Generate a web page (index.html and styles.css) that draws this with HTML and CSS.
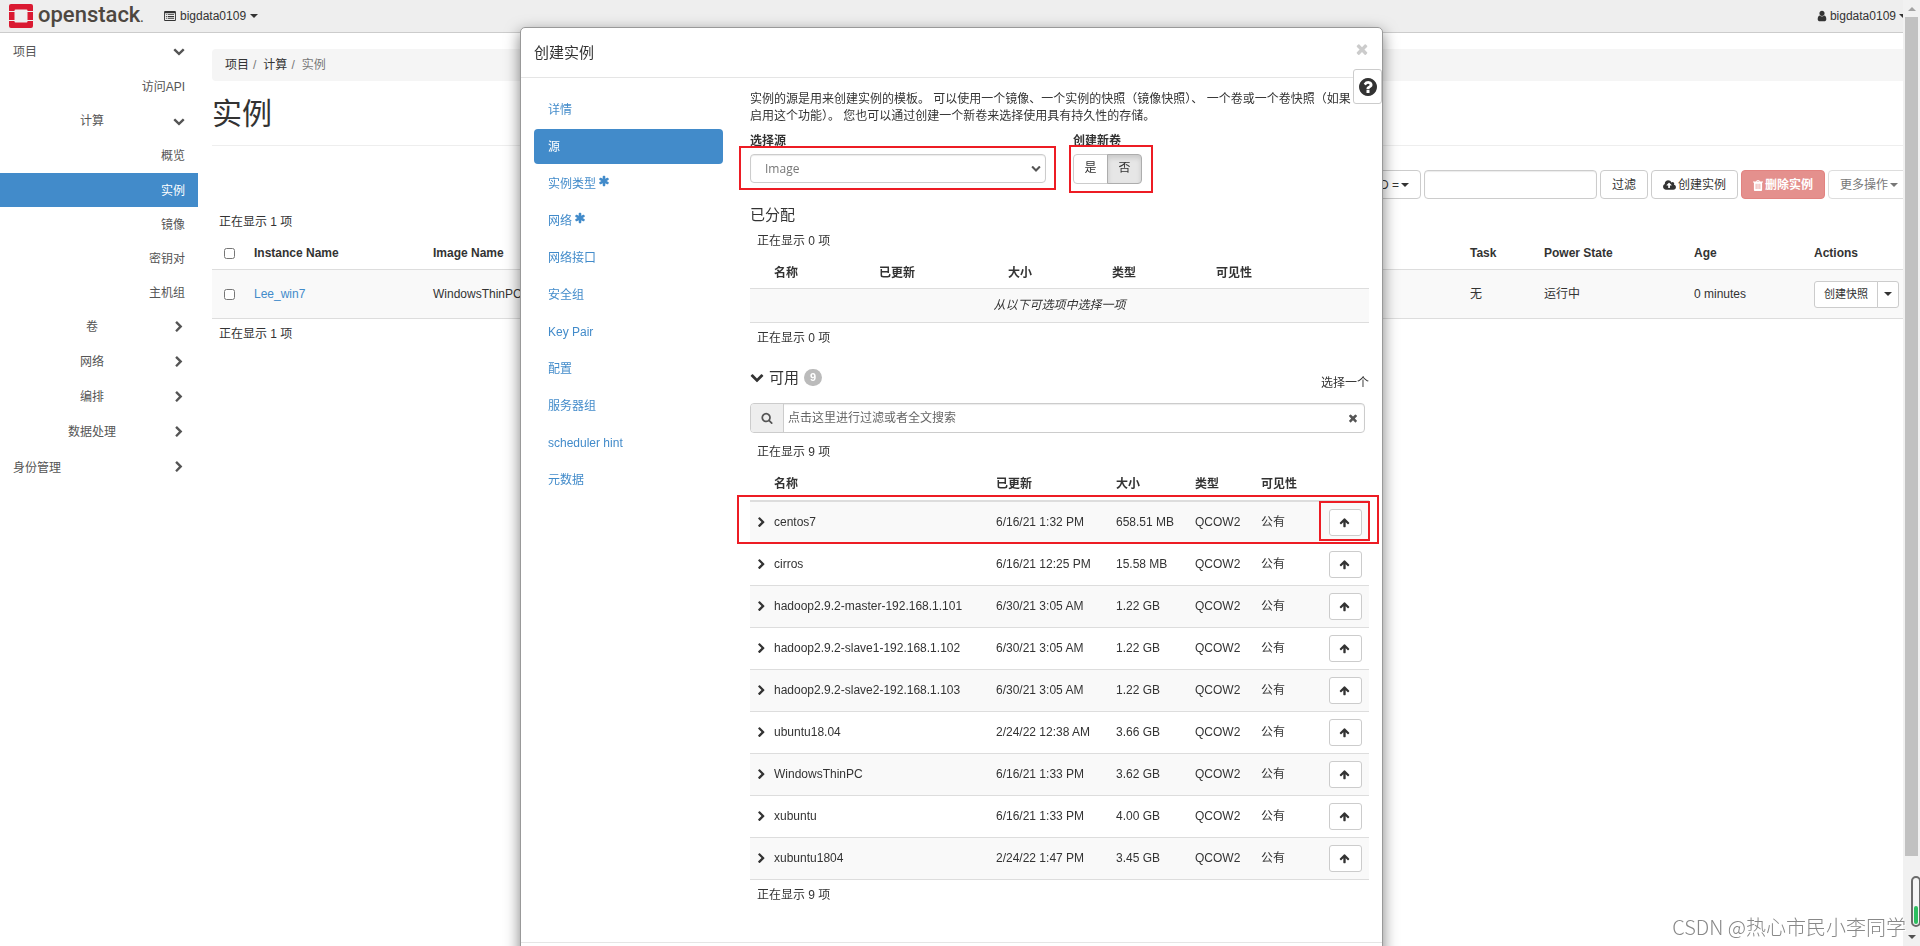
FILE: index.html
```html
<!DOCTYPE html>
<html lang="zh-CN">
<head>
<meta charset="utf-8">
<title>实例 - OpenStack Dashboard</title>
<link rel="stylesheet" href="styles.css">
</head>
<body>
<svg class="sprite" aria-hidden="true">
  <symbol id="down" viewBox="0 0 1792 1792"><path d="M1683 808l-742 741q-19 19-45 19t-45-19l-742-741q-19-19-19-45.500t19-45.500l166-165q19-19 45-19t45 19l531 531 531-531q19-19 45-19t45 19l166 165q19 19 19 45.500t-19 45.500z"/></symbol>
  <symbol id="right" viewBox="0 0 1792 1792"><path d="M1363 877l-742 742q-19 19-45 19t-45-19l-166-166q-19-19-19-45t19-45l531-531-531-531q-19-19-19-45t19-45l166-166q19-19 45-19t45 19l742 742q19 19 19 45t-19 45z"/></symbol>
  <symbol id="asterisk" viewBox="0 0 1792 1792"><path d="M1546 1050q46 26 59.500 77.500t-12.500 97.500l-64 110q-26 46-77.500 59.500t-97.500-12.500l-266-153v307q0 52-38 90t-90 38h-128q-52 0-90-38t-38-90v-307l-266 153q-46 26-97.500 12.500t-77.500-59.500l-64-110q-26-46-12.500-97.500t59.500-77.500l266-154-266-154q-46-26-59.500-77.500t12.500-97.500l64-110q26-46 77.500-59.500t97.500 12.500l266 153v-307q0-52 38-90t90-38h128q52 0 90 38t38 90v307l266-153q46-26 97.500-12.500t77.500 59.500l64 110q26 46 12.500 97.500t-59.500 77.500l-266 154z"/></symbol>
  <symbol id="times" viewBox="0 0 1792 1792"><path d="M1490 1322q0 40-28 68l-136 136q-28 28-68 28t-68-28l-294-294-294 294q-28 28-68 28t-68-28l-136-136q-28-28-28-68t28-68l294-294-294-294q-28-28-28-68t28-68l136-136q28-28 68-28t68 28l294 294 294-294q28-28 68-28t68 28l136 136q28 28 28 68t-28 68l-294 294 294 294q28 28 28 68z"/></symbol>
  <symbol id="question" viewBox="128 128 1536 1536"><path d="M1024 1376v-192q0-14-9-23t-23-9h-192q-14 0-23 9t-9 23v192q0 14 9 23t23 9h192q14 0 23-9t9-23zm256-672q0-88-55.500-163t-138.500-116-170-41q-243 0-371 213-15 24 8 42l132 100q7 6 19 6 16 0 25-12 53-68 86-92 34-24 86-24 48 0 85.500 26t37.500 59q0 38-20 61t-68 45q-63 28-115.500 86.500t-52.500 125.500v36q0 14 9 23t23 9h192q14 0 23-9t9-23q0-19 21.500-49.500t54.500-49.500q32-18 49-28.500t46-35 44.500-48 28-60.500 12.500-81zm384 192q0 209-103 385.500t-279.500 279.500-385.500 103-385.500-103-279.500-279.500-103-385.500 103-385.500 279.500-279.500 385.500-103 385.500 103 279.500 279.500 103 385.500z"/></symbol>
  <symbol id="search" viewBox="0 0 1792 1792"><path d="M1216 832q0-185-131.500-316.500t-316.500-131.500-316.500 131.500-131.500 316.500 131.500 316.500 316.500 131.500 316.500-131.500 131.500-316.500zm512 832q0 52-38 90t-90 38q-54 0-90-38l-343-342q-179 124-399 124-143 0-273.500-55.500t-225-150-150-225-55.500-273.500 55.500-273.500 150-225 225-150 273.500-55.500 273.500 55.500 225 150 150 225 55.500 273.500q0 220-124 399l343 343q37 37 37 90z"/></symbol>
  <symbol id="up" viewBox="0 0 1792 1792"><path d="M1675 971q0 51-37 90l-75 75q-38 38-91 38-54 0-90-38l-294-293v704q0 52-37.500 84.500t-90.500 32.500h-128q-53 0-90.500-32.500t-37.500-84.500v-704l-294 293q-36 38-90 38t-90-38l-75-75q-38-38-38-90 0-53 38-91l651-651q35-37 90-37 54 0 91 37l651 651q37 39 37 91z"/></symbol>
  <symbol id="user" viewBox="0 0 1792 1792"><path d="M1536 1399q0 109-62.500 187t-150.500 78h-854q-88 0-150.500-78t-62.500-187q0-85 8.500-160.500t31.500-152 58.500-131 94-89 134.500-34.500q131 128 313 128t313-128q76 0 134.500 34.500t94 89 58.500 131 31.500 152 8.500 160.500zm-256-887q0 159-112.500 271.500t-271.500 112.500-271.500-112.500-112.500-271.500 112.500-271.500 271.500-112.500 271.500 112.500 112.500 271.500z"/></symbol>
  <symbol id="cloud" viewBox="-64 0 1920 1792"><path d="M1216 928q0-14-9-23l-352-352q-9-9-23-9t-23 9l-351 351q-10 12-10 24 0 14 9 23t23 9h224v352q0 13 9.500 22.500t22.500 9.500h192q13 0 22.500-9.500t9.500-22.500v-352h224q13 0 22.500-9.500t9.500-22.500zm640 288q0 159-112.500 271.500t-271.500 112.500h-1088q-185 0-316.500-131.500t-131.500-316.500q0-130 70-240t188-165q-2-30-2-43 0-212 150-362t362-150q156 0 285.500 87t188.500 231q71-62 166-62 106 0 181 75t75 181q0 76-41 138 130 31 213.500 135.500t83.500 238.500z"/></symbol>
  <symbol id="trash" viewBox="0 0 11 12"><path fill-rule="evenodd" d="M3.500 1.500L4 .5Q4.200 0 4.700 0h1.600q.5 0 .7.500l.5 1H11v1.200h-1V11q0 1-1 1H2q-1 0-1-1V2.700H0V1.500zM4.500 1.500h2L6.200.9H4.800zM3 4.200v5.600h.8V4.200zm2.100 0v5.600h.8V4.200zm2.100 0v5.600H8V4.200z"/></symbol>
  <symbol id="listalt" viewBox="0 0 13 11"><path fill-rule="evenodd" d="M1 0h11q1 0 1 1v9q0 1-1 1H1q-1 0-1-1V1q0-1 1-1zM1 2.500V10h11V2.500zM2 3.500h1v1H2zm2 0h7v1H4zm-2 2h1v1H2zm2 0h7v1H4zm-2 2h1v1H2zm2 0h7v1H4z"/></symbol>
  <symbol id="caret" viewBox="0 0 8 4"><path d="M0 0h8L4 4z"/></symbol>
  <symbol id="caretup" viewBox="0 0 8 4"><path d="M0 4h8L4 0z"/></symbol>
</svg>

<div class="page">
  <header class="topbar">
    <a class="brand" href="#">
      <svg class="brand-mark" viewBox="0 0 24 24"><path fill="#da1a32" fill-rule="evenodd" d="M2 0h20q2 0 2 2v5h-5.500V6.500q0-1-1-1h-11q-1 0-1 1V7H0V2q0-2 2-2zM0 8h5.500v8H0zm18.500 0H24v8h-5.500zM0 17h5.500v.5q0 1 1 1h11q1 0 1-1V17H24v5q0 2-2 2H2q-2 0-2-2z"/></svg>
      <span class="brand-name">openstack<small>.</small></span>
    </a>
    <button class="context" type="button"><svg class="i-list"><use href="#listalt"/></svg>bigdata0109<svg class="caret"><use href="#caret"/></svg></button>
    <button class="user" type="button"><svg class="i12"><use href="#user"/></svg>bigdata0109<svg class="caret"><use href="#caret"/></svg></button>
  </header>

  <div class="shell">
    <nav class="sidebar">
      <a class="root" href="#"><span>项目</span><svg class="i12"><use href="#down"/></svg></a>
      <a class="leaf" href="#">访问API</a>
      <a class="group" href="#"><span>计算</span><svg class="i12"><use href="#down"/></svg></a>
      <a class="leaf" href="#">概览</a>
      <a class="leaf active" href="#">实例</a>
      <a class="leaf" href="#">镜像</a>
      <a class="leaf" href="#">密钥对</a>
      <a class="leaf" href="#">主机组</a>
      <a class="group" href="#"><span>卷</span><svg class="i12"><use href="#right"/></svg></a>
      <a class="group" href="#"><span>网络</span><svg class="i12"><use href="#right"/></svg></a>
      <a class="group" href="#"><span>编排</span><svg class="i12"><use href="#right"/></svg></a>
      <a class="group" href="#"><span>数据处理</span><svg class="i12"><use href="#right"/></svg></a>
      <a class="root" href="#"><span>身份管理</span><svg class="i12"><use href="#right"/></svg></a>
    </nav>

    <main class="main">
      <ol class="breadcrumb"><li><a href="#">项目</a></li><li><a href="#">计算</a></li><li>实例</li></ol>
      <h1>实例</h1>
      <div class="toolbar">
        <button class="btn" type="button">实例 ID =<svg class="caret"><use href="#caret"/></svg></button>
        <input class="filter-input" type="text" aria-label="过滤条件">
        <button class="btn" type="button">过滤</button>
        <button class="btn" type="button"><svg class="i-cloud"><use href="#cloud"/></svg>创建实例</button>
        <button class="btn danger" type="button" disabled><svg class="i-trash"><use href="#trash"/></svg>删除实例</button>
        <button class="btn muted" type="button" disabled>更多操作<svg class="caret"><use href="#caret"/></svg></button>
      </div>
      <p class="count">正在显示 1 项</p>
      <table class="instances">
        <colgroup><col class="c-check"><col class="c-inst"><col class="c-image"><col><col class="c-task"><col class="c-power"><col class="c-age"><col class="c-actions"></colgroup>
        <thead><tr><th><input type="checkbox" aria-label="全选"></th><th>Instance Name</th><th>Image Name</th><th></th><th>Task</th><th>Power State</th><th>Age</th><th>Actions</th></tr></thead>
        <tbody><tr><td><input type="checkbox" aria-label="Lee_win7"></td><td><a href="#">Lee_win7</a></td><td>WindowsThinPC</td><td></td><td>无</td><td>运行中</td><td>0 minutes</td>
          <td><div class="split"><button type="button">创建快照</button><button type="button" aria-label="更多"><svg class="caret"><use href="#caret"/></svg></button></div></td></tr></tbody>
      </table>
      <p class="count">正在显示 1 项</p>
    </main>
  </div>
</div>

<div class="overlay">
  <section class="modal" role="dialog" aria-labelledby="modal-title">
    <header class="modal-head">
      <h2 id="modal-title">创建实例</h2>
      <button class="close" type="button" aria-label="关闭"><svg><use href="#times"/></svg></button>
    </header>
    <button class="help" type="button" aria-label="帮助"><svg><use href="#question"/></svg></button>
    <div class="modal-body">
      <nav class="steps">
        <a href="#">详情</a>
        <a class="active" href="#">源</a>
        <a href="#">实例类型<svg><use href="#asterisk"/></svg></a>
        <a href="#">网络<svg><use href="#asterisk"/></svg></a>
        <a href="#">网络接口</a>
        <a href="#">安全组</a>
        <a href="#">Key Pair</a>
        <a href="#">配置</a>
        <a href="#">服务器组</a>
        <a href="#">scheduler hint</a>
        <a href="#">元数据</a>
      </nav>
      <div class="content">
        <p class="intro">实例的源是用来创建实例的模板。 可以使用一个镜像、一个实例的快照（镜像快照）、 一个卷或一个卷快照（如果启用这个功能）。 您也可以通过创建一个新卷来选择使用具有持久性的存储。</p>
        <div class="fields">
          <div class="field source">
            <label for="source">选择源</label>
            <div class="select-wrap">
              <select id="source"><option>Image</option></select>
              <svg class="select-arrow"><use href="#down"/></svg>
              <span class="mark mark-select"></span>
            </div>
          </div>
          <div class="field">
            <span class="label" id="volume-label">创建新卷</span>
            <div class="toggle" role="group" aria-labelledby="volume-label">
              <button type="button">是</button><button class="on" type="button">否</button>
              <span class="mark mark-toggle"></span>
            </div>
          </div>
        </div>

        <h3 class="allocated-title">已分配</h3>
        <p class="count">正在显示 0 项</p>
        <table class="allocated">
          <colgroup><col class="c-exp"><col class="a-name"><col class="a-date"><col class="a-size"><col class="a-type"><col></colgroup>
          <thead><tr><th></th><th>名称</th><th>已更新</th><th>大小</th><th>类型</th><th>可见性</th></tr></thead>
          <tbody><tr><td colspan="6"><em>从以下可选项中选择一项</em></td></tr></tbody>
        </table>
        <p class="count">正在显示 0 项</p>

        <div class="available-head">
          <h3><svg class="i14"><use href="#down"/></svg>可用<span class="badge">9</span></h3>
          <span>选择一个</span>
        </div>
        <div class="searchbar">
          <span class="addon"><svg class="i12"><use href="#search"/></svg></span>
          <input type="text" placeholder="点击这里进行过滤或者全文搜索" aria-label="搜索">
          <button type="button" aria-label="清除"><svg class="i12"><use href="#times"/></svg></button>
        </div>
        <p class="count">正在显示 9 项</p>
        <table class="available">
          <colgroup><col class="c-exp"><col class="v-name"><col class="v-date"><col class="v-size"><col class="v-type"><col class="v-vis"><col></colgroup>
          <thead><tr><th></th><th>名称</th><th>已更新</th><th>大小</th><th>类型</th><th>可见性</th><th></th></tr></thead>
          <tbody>
            <tr class="picked"><td><svg class="i-exp"><use href="#right"/></svg></td><td>centos7</td><td>6/16/21 1:32 PM</td><td>658.51 MB</td><td>QCOW2</td><td>公有</td><td><span class="mark mark-row"></span><button type="button" aria-label="分配"><svg class="i12"><use href="#up"/></svg><span class="mark mark-button"></span></button></td></tr>
            <tr><td><svg class="i-exp"><use href="#right"/></svg></td><td>cirros</td><td>6/16/21 12:25 PM</td><td>15.58 MB</td><td>QCOW2</td><td>公有</td><td><button type="button" aria-label="分配"><svg class="i12"><use href="#up"/></svg></button></td></tr>
            <tr><td><svg class="i-exp"><use href="#right"/></svg></td><td>hadoop2.9.2-master-192.168.1.101</td><td>6/30/21 3:05 AM</td><td>1.22 GB</td><td>QCOW2</td><td>公有</td><td><button type="button" aria-label="分配"><svg class="i12"><use href="#up"/></svg></button></td></tr>
            <tr><td><svg class="i-exp"><use href="#right"/></svg></td><td>hadoop2.9.2-slave1-192.168.1.102</td><td>6/30/21 3:05 AM</td><td>1.22 GB</td><td>QCOW2</td><td>公有</td><td><button type="button" aria-label="分配"><svg class="i12"><use href="#up"/></svg></button></td></tr>
            <tr><td><svg class="i-exp"><use href="#right"/></svg></td><td>hadoop2.9.2-slave2-192.168.1.103</td><td>6/30/21 3:05 AM</td><td>1.22 GB</td><td>QCOW2</td><td>公有</td><td><button type="button" aria-label="分配"><svg class="i12"><use href="#up"/></svg></button></td></tr>
            <tr><td><svg class="i-exp"><use href="#right"/></svg></td><td>ubuntu18.04</td><td>2/24/22 12:38 AM</td><td>3.66 GB</td><td>QCOW2</td><td>公有</td><td><button type="button" aria-label="分配"><svg class="i12"><use href="#up"/></svg></button></td></tr>
            <tr><td><svg class="i-exp"><use href="#right"/></svg></td><td>WindowsThinPC</td><td>6/16/21 1:33 PM</td><td>3.62 GB</td><td>QCOW2</td><td>公有</td><td><button type="button" aria-label="分配"><svg class="i12"><use href="#up"/></svg></button></td></tr>
            <tr><td><svg class="i-exp"><use href="#right"/></svg></td><td>xubuntu</td><td>6/16/21 1:33 PM</td><td>4.00 GB</td><td>QCOW2</td><td>公有</td><td><button type="button" aria-label="分配"><svg class="i12"><use href="#up"/></svg></button></td></tr>
            <tr><td><svg class="i-exp"><use href="#right"/></svg></td><td>xubuntu1804</td><td>2/24/22 1:47 PM</td><td>3.45 GB</td><td>QCOW2</td><td>公有</td><td><button type="button" aria-label="分配"><svg class="i12"><use href="#up"/></svg></button></td></tr>
          </tbody>
        </table>
        <p class="count">正在显示 9 项</p>
      </div>
    </div>
    <footer class="modal-foot"></footer>
  </section>
</div>

<div class="scrollbar" aria-hidden="true">
  <svg class="caret"><use href="#caretup"/></svg>
  <span class="thumb"></span>
  <svg class="caret dark"><use href="#caret"/></svg>
</div>
<div class="meter" aria-hidden="true"><span></span></div>
<p class="watermark">CSDN @热心市民小李同学</p>
</body>
</html>
```
FILE: styles.css
```css
* { box-sizing: border-box; }

body {
  margin: 0;
  overflow: hidden;
  background: #fff;
  color: #333;
  font: 12px/17px "Liberation Sans", "Noto Sans CJK SC", sans-serif;
}

h1, h2, h3, p, ol { margin: 0; padding: 0; font-weight: normal; }
a { color: #428bca; text-decoration: none; }
button, input, select { margin: 0; font: inherit; color: inherit; }
button { cursor: pointer; }
svg { flex: none; fill: currentColor; }
table { width: 100%; border-collapse: collapse; table-layout: fixed; }
th { text-align: left; }
th, td { padding: 0 7px; white-space: nowrap; }
th { padding-top: 4px; }
td { padding-top: 1px; }

.sprite { position: absolute; width: 0; height: 0; }
.i12 { width: 12px; height: 12px; }
.i14 { width: 14px; height: 14px; }
.caret { width: 8px; height: 4px; }

/* page */
.page { min-height: 100vh; padding-right: 17px; overflow: hidden; }

.topbar {
  display: flex;
  align-items: center;
  height: 33px;
  padding-left: 9px;
  background: #eee;
  border-bottom: 1px solid #ccc;
}
.brand { display: flex; align-items: center; gap: 5px; width: 155px; color: #4d4740; }
.brand-mark { width: 24px; height: 24px; }
.brand-name { font: 500 22px/24px Roboto, sans-serif; }
.brand-name small { font-size: 12px; }
.topbar button { display: flex; align-items: center; gap: 4px; padding: 0; border: 0; background: none; }
.i-list { width: 12px; height: 10px; }
.topbar .user { gap: 2px; margin: 0 -4px 0 auto; }
.user .caret { margin-left: 1px; }

.shell { display: flex; }
.sidebar { flex: none; width: 198px; }
.sidebar a { display: flex; align-items: center; height: 35px; padding: 0 13px; color: #555; }
.sidebar span { padding-top: 2px; }
.sidebar .leaf { justify-content: flex-end; height: 34px; padding-top: 2px; }
.sidebar .group span { flex: 1; padding-right: 2px; text-align: center; }
.sidebar .root { justify-content: space-between; height: 36px; }
.sidebar .group + .leaf { height: 35px; }
.sidebar a.active { background: #428bca; color: #fff; }

.main { flex: 1; min-width: 0; padding: 16px 0 0 14px; }
.breadcrumb {
  display: flex;
  padding: 8px 13px 7px;
  background: #f5f5f5;
  border-radius: 4px 0 0 4px;
  list-style: none;
  color: #777;
}
.breadcrumb a { color: #333; }
.breadcrumb li + li::before { content: "/"; padding: 0 7px 0 4px; }
h1 { padding: 15px 0 13px; border-bottom: 1px solid #eee; font-size: 30px; line-height: 36px; }
.toolbar { display: flex; justify-content: flex-end; gap: 3px; margin: 24px -7px 15px 0; }
.btn, .filter-input { height: 29px; border: 1px solid #ccc; border-radius: 4px; background: #fff; }
.btn { display: flex; align-items: center; gap: 2px; padding: 1px 11px 0; white-space: nowrap; }
.filter-input { width: 173px; box-shadow: inset 0 1px 1px rgba(0, 0, 0, .08); }
.i-cloud { width: 13px; height: 12px; }
.i-trash { width: 10px; height: 11px; }
.danger { background: #e4908d; border-color: #e28380; color: #fff; font-weight: bold; }
.muted { color: #777; border-color: #ddd; }
.count { padding-left: 7px; }

.c-check { width: 35px; }
.c-inst { width: 179px; }
.c-image { width: 150px; }
.c-task { width: 74px; }
.c-power { width: 150px; }
.c-age { width: 120px; }
.c-actions { width: 96px; }
.instances { margin: 4px 0 7px; }
.instances th { height: 34px; }
.instances th:first-child, .instances td:first-child { padding-left: 12px; }
.instances td { height: 49px; border: solid #ddd; border-width: 1px 0; background: #f9f9f9; }
.instances input { display: block; width: 11px; height: 11px; }
.split { display: flex; }
.split button { height: 27px; padding: 0 9px; border: 1px solid #ccc; background: #fff; border-radius: 3px 0 0 3px; font-size: 11px; }
.split button + button { display: flex; align-items: center; margin-left: -1px; padding: 0 6px; border-radius: 0 3px 3px 0; }

/* dialog */
.overlay { position: fixed; inset: 0; display: flex; justify-content: center; align-items: flex-start; padding: 27px 17px 0 0; }
.modal {
  position: relative;
  width: 863px;
  border: 1px solid #999;
  border-radius: 5px;
  background: #fff;
  box-shadow: 0 5px 15px rgba(0, 0, 0, .5);
}
.modal-head { display: flex; align-items: center; justify-content: space-between; height: 50px; padding: 0 12px 0 13px; border-bottom: 1px solid #e5e5e5; }
.modal-head h2 { font-size: 15px; }
.close { display: flex; padding: 0 0 8px; border: 0; background: none; color: #ccc; }
.close svg { width: 16px; height: 16px; }
.help {
  position: absolute;
  top: 41px;
  right: 0;
  display: flex;
  align-items: center;
  justify-content: center;
  width: 29px;
  height: 35px;
  padding: 0;
  border: 1px solid #ccc;
  border-radius: 3px;
  background: #fff;
}
.help svg { width: 18px; height: 18px; }
.modal-body { display: flex; gap: 27px; padding: 13px 13px 38px; }

.steps { display: flex; flex-direction: column; flex: none; gap: 2px; width: 189px; padding-top: 1px; }
.steps a { display: flex; align-items: center; gap: 2px; height: 35px; padding: 2px 14px 0; border-radius: 4px; }
.steps svg { width: 12px; height: 12px; margin-bottom: 8px; }
.steps .active { background: #428bca; color: #fff; }

.content { flex: 1; min-width: 0; }
.intro { margin-bottom: 8px; padding-right: 14px; }
.fields { display: flex; gap: 27px; }
.source { width: 296px; }
.field label, .field .label { display: block; margin-bottom: 4px; font-weight: bold; }
.select-wrap, .toggle { position: relative; }
.select-wrap select {
  display: block;
  width: 100%;
  height: 29px;
  padding: 0 14px;
  border: 1px solid #ccc;
  border-radius: 4px;
  background: #fff;
  color: #777;
  font-family: "Open Sans", sans-serif;
  appearance: none;
  box-shadow: inset 0 1px 1px rgba(0, 0, 0, .08);
}
.select-arrow { position: absolute; top: 9px; right: 5px; width: 10px; height: 10px; color: #555; pointer-events: none; }
.toggle { display: flex; }
.toggle button { width: 35px; height: 30px; padding: 0 0 1px; border: 1px solid #ccc; border-radius: 4px 0 0 4px; background: #fff; }
.toggle .on { margin-left: -1px; border-color: #adadad; border-radius: 0 4px 4px 0; background: #e6e6e6; box-shadow: inset 0 3px 5px rgba(0, 0, 0, .125); }

/* red highlight frames */
.mark { position: absolute; border: 2px solid #ed1c24; pointer-events: none; }
.mark-select { inset: -8px -10px -7px -11px; }
.mark-toggle { inset: -9px -11px -9px -4px; }
.mark-row { inset: -7px -10px 0 -13px; }
.mark-button { inset: -9px -9px -6px -11px; }

.content h3 { font-size: 15px; }
.allocated-title { margin: 22px 0 10px; }
.c-exp { width: 17px; }
.a-name { width: 105px; }
.a-date { width: 129px; }
.a-size, .a-type { width: 104px; }
.allocated { margin: 6px 0 7px; }
.allocated th { height: 32px; }
.allocated td { height: 34px; border: solid #ddd; border-width: 1px 0; background: #f9f9f9; text-align: center; }

.available-head { display: flex; align-items: flex-end; justify-content: space-between; margin: 22px 0 11px; }
.available-head h3 { display: flex; align-items: center; gap: 5px; padding-bottom: 6px; }
.badge { min-width: 18px; padding: 0 5px; border-radius: 9px; background: #bbb; color: #fff; font-size: 11px; line-height: 17px; font-weight: bold; text-align: center; }
.searchbar { display: flex; height: 30px; margin: 0 4px 11px 0; border: 1px solid #ccc; border-radius: 4px; box-shadow: inset 0 1px 1px rgba(0, 0, 0, .08); overflow: hidden; }
.addon { display: flex; align-items: center; justify-content: center; width: 33px; border-right: 1px solid #ccc; background: #eee; color: #555; }
.searchbar input { flex: 1; min-width: 0; padding: 2px 4px 0; border: 0; background: none; }
.searchbar input::placeholder { color: #666; opacity: 1; }
.searchbar button { display: flex; align-items: center; padding: 0 5px; border: 0; background: none; color: #555; }

.v-name { width: 222px; }
.v-date { width: 120px; }
.v-size { width: 79px; }
.v-type { width: 66px; }
.v-vis { width: 66px; }
.available { margin: 5px 0 7px; border-collapse: separate; border-spacing: 0; }
.available th { height: 36px; border-bottom: 2px solid #ddd; }
.available td { height: 42px; border-bottom: 1px solid #ddd; }
.available tbody tr:nth-child(odd) td { background: #f9f9f9; }
.available td:first-child { padding-left: 6px; padding-right: 0; }
.available button { position: relative; display: flex; align-items: center; justify-content: center; width: 33px; height: 27px; margin-left: auto; padding: 0 2px 0 0; border: 1px solid #ccc; border-radius: 3px; background: #fff; }
.available button .i12 { width: 11px; height: 11px; }
.i-exp { display: block; width: 11px; height: 11px; }
.picked { position: relative; }
.modal-foot { height: 56px; border-top: 1px solid #e5e5e5; }

/* window furniture */
.scrollbar {
  position: fixed;
  inset: 0 0 0 auto;
  display: flex;
  flex-direction: column;
  align-items: center;
  width: 17px;
  padding: 7px 0;
  background: #f1f1f1;
  color: #a3a3a3;
}
.scrollbar .dark { margin-top: auto; color: #505050; }
.thumb { width: 13px; height: 90%; margin-top: 6px; background: #c1c1c1; }
.meter {
  position: fixed;
  right: -1px;
  bottom: 19px;
  display: flex;
  align-items: flex-end;
  width: 10px;
  height: 51px;
  padding: 1px;
  border: 2px solid #6b6b6b;
  border-radius: 5px;
  background: #f5f5f5;
}
.meter span { width: 4px; height: 18px; border-radius: 2px; background: #2dbe60; }
.watermark {
  position: fixed;
  right: 14px;
  bottom: 7px;
  color: #888;
  font: 20px/24px "Noto Sans CJK SC", sans-serif;
  font-weight: 300;
  text-shadow: 1px 1px 0 #fff;
}
```
